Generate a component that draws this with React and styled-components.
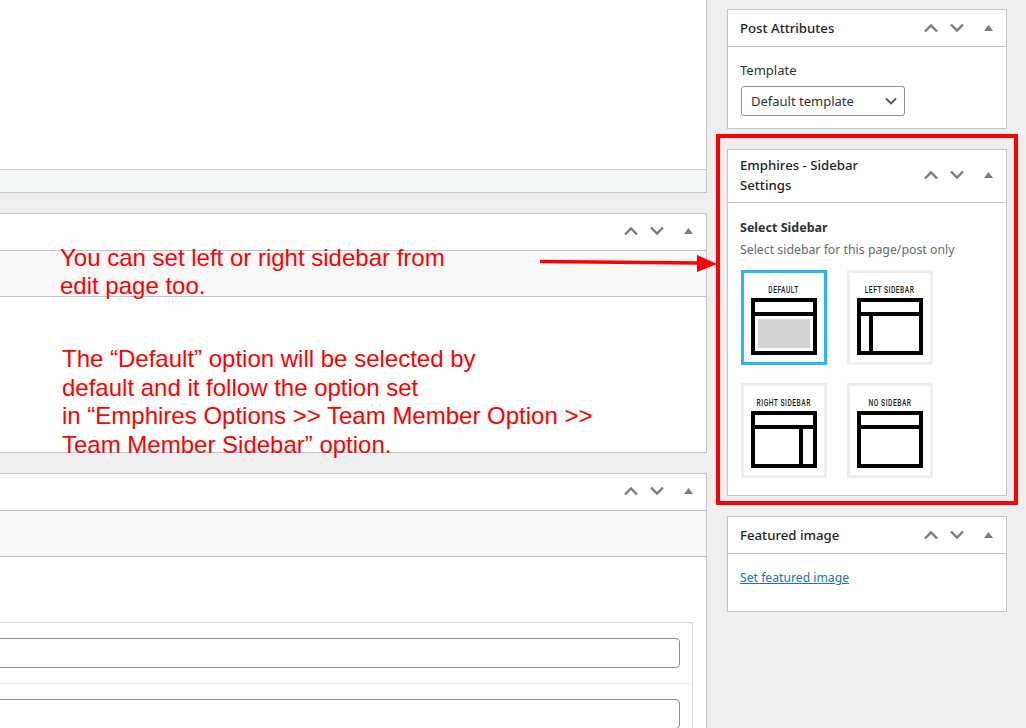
import React from "react";
import styled, { createGlobalStyle } from "styled-components";

const Global = createGlobalStyle`
	html, body {
		margin: 0;
		padding: 0;
		background: #efefef;
	}
	* {
		box-sizing: border-box;
	}
`;

const Page = styled.div`
	position: relative;
	display: flex;
	width: 1026px;
	height: 728px;
	overflow: hidden;
	background: #efefef;
	color: #1d2327;
	font-family: "Noto Sans", "Open Sans", sans-serif;
	font-size: 13px;
`;

const Main = styled.div`
	display: flex;
	flex-direction: column;
	gap: 20px;
	width: 707px;
	flex: none;
`;

const Side = styled.div`
	display: flex;
	flex-direction: column;
	gap: 20px;
	width: 280px;
	flex: none;
	margin-left: 20px;
	padding-top: 9px;
`;

// left column
const EditorBox = styled.div`
	display: flex;
	flex-direction: column;
	flex: none;
	height: 193px;
	background: #fff;
	border-right: 1px solid #c3c4c7;
	border-bottom: 1px solid #c3c4c7;
`;

const EditorArea = styled.div`
	flex: 1;
`;

const StatusBar = styled.div`
	height: 23px;
	background: #f6f7f7;
	border-top: 1px solid #c3c4c7;
`;

const MetaBox = styled.div`
	display: flex;
	flex-direction: column;
	flex: ${(props) => (props.$grow ? "1" : "none")};
	height: ${(props) => (props.$grow ? "auto" : "240px")};
	background: #fff;
	border: 1px solid #c3c4c7;
	border-left: 0;
	${(props) => props.$grow && "border-bottom: 0;"}
`;

const MetaHeader = styled.div`
	display: flex;
	justify-content: flex-end;
	align-items: center;
	flex: none;
	height: 37px;
	padding-bottom: 2px;
	border-bottom: 1px solid #c3c4c7;
`;

const TabStrip = styled.div`
	flex: none;
	height: 46px;
	background: #f8f8f8;
	border-bottom: 1px solid #c3c4c7;
`;

const FieldPanel = styled.div`
	margin: 65px 13px 0 0;
	border: 1px solid #d5d6d8;
	border-left: 0;
	border-bottom: 0;
`;

const FieldRow = styled.div`
	padding: 15px 12px 15px 0;
	border-bottom: 1px solid #ececec;
`;

const FieldInput = styled.div`
	height: 30px;
	margin-left: -10px;
	background: #fff;
	border: 1px solid #8c8f94;
	border-radius: 4px;
`;

// right column
const SideBox = styled.div`
	flex: none;
	background: #fff;
	border: 1px solid #c3c4c7;
`;

const SideHeader = styled.div`
	display: flex;
	align-items: center;
	justify-content: space-between;
	height: ${(props) => props.$height}px;
	padding: 0 0 ${(props) => props.$lift || 0}px 12px;
	border-bottom: 1px solid #c3c4c7;
`;

const SideTitle = styled.h2`
	margin: 0;
	width: 150px;
	font-size: 13.2px;
	font-weight: 500;
	line-height: 20px;
	color: #1d2327;
`;

const Handles = styled.div`
	display: flex;
	align-items: center;
	flex: none;
`;

const HandleBtn = styled.span`
	display: flex;
	align-items: center;
	justify-content: center;
	width: ${(props) => props.$w || 26}px;
	height: 26px;
	color: #787c82;
`;

const SideBody = styled.div`
	height: ${(props) => props.$height}px;
	padding: ${(props) => props.$pad || "12px"};
`;

const FieldLabel = styled.div`
	font-size: 13px;
	line-height: 20px;
	color: #2c3338;
`;

const SelectBox = styled.div`
	display: flex;
	align-items: center;
	justify-content: space-between;
	width: 164px;
	height: 30px;
	margin: 6px 0 0 1px;
	padding: 0 7px 0 9px;
	border: 1px solid #8c8f94;
	border-radius: 3px;
	color: #2c3338;
	font-size: 13px;
`;

const BoldLabel = styled.div`
	font-size: 12.5px;
	font-weight: 700;
	line-height: 18px;
	color: #2c3338;
`;

const Hint = styled.div`
	margin-top: 4px;
	font-size: 12.3px;
	line-height: 18px;
	color: #646970;
`;

const ThumbGrid = styled.div`
	display: grid;
	grid-template-columns: 86px 86px;
	grid-auto-rows: 95px;
	column-gap: 20px;
	row-gap: 18px;
	margin: 11px 0 0 1px;
`;

const Thumb = styled.div`
	display: flex;
	flex-direction: column;
	align-items: center;
	padding-top: 11px;
	background: #fff;
	border: 3px solid ${(props) => (props.$active ? "#22b7fe" : "#eeeeee")};
`;

const ThumbLabel = styled.div`
	height: 14px;
	white-space: nowrap;
	font-family: "Roboto", sans-serif;
	font-size: 9px;
	font-weight: 500;
	line-height: 13px;
	letter-spacing: 0.7px;
	color: #1a1a1a;
	transform: scaleX(0.74);
`;

const ThumbIcon = styled.svg`
	display: block;
`;

const LinkText = styled.a`
	font-size: 12.2px;
	color: #2271b1;
	text-decoration: underline;
`;

// annotations on top of the screenshot
const Highlight = styled.div`
	position: absolute;
	left: 716px;
	top: 134px;
	width: 302px;
	height: 371px;
	border: 4px solid #fe0000;
`;

const Note = styled.div`
	position: absolute;
	left: ${(props) => props.$x}px;
	top: ${(props) => props.$y}px;
	white-space: nowrap;
	font-family: "Liberation Sans", Arial, sans-serif;
	font-size: 24px;
	line-height: ${(props) => props.$leading}px;
	color: #fe0000;
`;

const Arrow = styled.svg`
	position: absolute;
	left: 538px;
	top: 250px;
`;

const Up = () => (
	<svg width="14" height="10" viewBox="0 0 14 10" fill="none">
		<path d="M1 8.5 7 2.5l6 6" stroke="currentColor" strokeWidth="2.4" />
	</svg>
);

const Down = () => (
	<svg width="14" height="10" viewBox="0 0 14 10" fill="none">
		<path d="M1 1.5 7 7.5l6-6" stroke="currentColor" strokeWidth="2.4" />
	</svg>
);

const Tri = () => (
	<svg width="9" height="6" viewBox="0 0 9 6">
		<path d="M4.5 0l4.5 6H0z" fill="currentColor" />
	</svg>
);

const Controls = () => (
	<Handles>
		<HandleBtn><Up /></HandleBtn>
		<HandleBtn><Down /></HandleBtn>
		<HandleBtn $w={36}><Tri /></HandleBtn>
	</Handles>
);

// kind: default | left | right | none
const LayoutIcon = ({ kind }) => (
	<ThumbIcon width="66" height="57" viewBox="0 0 66 57">
		<rect x="2" y="2" width="62" height="53" fill="#fff" stroke="#000" strokeWidth="4" />
		<rect x="2" y="14" width="62" height="4" fill="#000" />
		{kind === "default" && <rect x="7" y="21" width="52" height="29" fill="#d3d3d3" />}
		{kind === "left" && <rect x="12" y="16" width="4" height="38" fill="#000" />}
		{kind === "right" && <rect x="48" y="16" width="4" height="38" fill="#000" />}
	</ThumbIcon>
);

const layouts = [
	{ kind: "default", label: "DEFAULT", active: true },
	{ kind: "left", label: "LEFT SIDEBAR" },
	{ kind: "right", label: "RIGHT SIDEBAR" },
	{ kind: "none", label: "NO SIDEBAR" },
];

export default function App() {
	return (
		<Page>
			<Global />
			<Main>
				<EditorBox>
					<EditorArea />
					<StatusBar />
				</EditorBox>
				<MetaBox>
					<MetaHeader><Controls /></MetaHeader>
					<TabStrip />
				</MetaBox>
				<MetaBox $grow>
					<MetaHeader><Controls /></MetaHeader>
					<TabStrip />
					<FieldPanel>
						<FieldRow><FieldInput /></FieldRow>
						<FieldRow><FieldInput /></FieldRow>
					</FieldPanel>
				</MetaBox>
			</Main>

			<Side>
				<SideBox>
					<SideHeader $height={37}>
						<SideTitle>Post Attributes</SideTitle>
						<Controls />
					</SideHeader>
					<SideBody $height={81} $pad="13px 12px">
						<FieldLabel>Template</FieldLabel>
						<SelectBox>
							Default template
							<svg width="12" height="8" viewBox="0 0 12 8" fill="none">
								<path d="M1 1.5l5 5 5-5" stroke="#50575e" strokeWidth="1.8" />
							</svg>
						</SelectBox>
					</SideBody>
				</SideBox>

				<SideBox>
					<SideHeader $height={53} $lift={2}>
						<SideTitle>Emphires - Sidebar Settings</SideTitle>
						<Controls />
					</SideHeader>
					<SideBody $height={292} $pad="16px 12px">
						<BoldLabel>Select Sidebar</BoldLabel>
						<Hint>Select sidebar for this page/post only</Hint>
						<ThumbGrid>
							{layouts.map((item) => (
								<Thumb key={item.kind} $active={item.active}>
									<ThumbLabel>{item.label}</ThumbLabel>
									<LayoutIcon kind={item.kind} />
								</Thumb>
							))}
						</ThumbGrid>
					</SideBody>
				</SideBox>

				<SideBox>
					<SideHeader $height={37}>
						<SideTitle>Featured image</SideTitle>
						<Controls />
					</SideHeader>
					<SideBody $height={57} $pad="14px 12px">
						<LinkText href="#">Set featured image</LinkText>
					</SideBody>
				</SideBox>
			</Side>

			<Highlight />
			<Note $x={60} $y={244} $leading={28}>
				You can set left or right sidebar from
				<br />
				edit page too.
			</Note>
			<Note $x={62} $y={345} $leading={28.5}>
				The “Default” option will be selected by
				<br />
				default and it follow the option set
				<br />
				in “Emphires Options &gt;&gt; Team Member Option &gt;&gt;
				<br />
				Team Member Sidebar” option.
			</Note>
			<Arrow width="180" height="28" viewBox="0 0 180 28">
				<path d="M2 11.5l157 1.5" stroke="#fe0000" strokeWidth="3.6" />
				<path d="M159 5l20 9-20 8z" fill="#fe0000" />
			</Arrow>
		</Page>
	);
}
